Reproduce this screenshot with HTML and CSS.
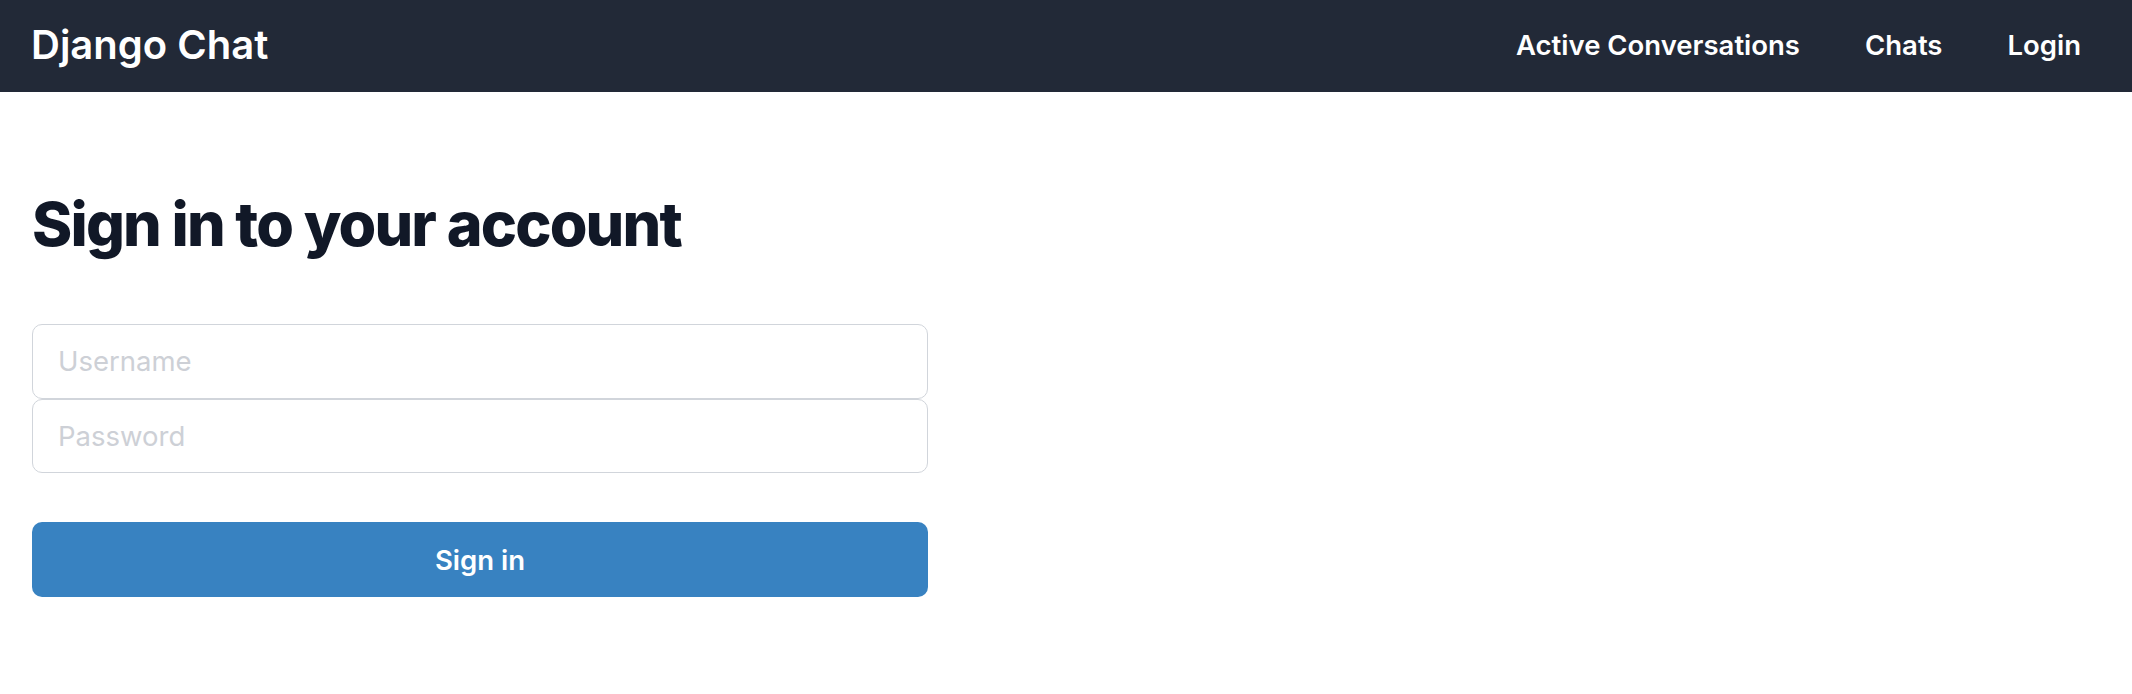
FILE: index.html
```html
<!DOCTYPE html>
<html lang="en">
<head>
<meta charset="utf-8">
<title>Django Chat</title>
<link rel="stylesheet" href="styles.css">
</head>
<body>
<header class="navbar">
  <a class="brand" href="#">Django Chat</a>
  <nav class="nav-links">
    <a href="#">Active Conversations</a>
    <a href="#">Chats</a>
    <a href="#">Login</a>
  </nav>
</header>
<main class="content">
  <h1 class="title">Sign in to your account</h1>
  <form class="login-form">
    <div class="fields">
      <input class="field" type="text" placeholder="Username">
      <input class="field" type="password" placeholder="Password">
    </div>
    <button class="submit" type="button">Sign in</button>
  </form>
</main>
</body>
</html>
```

FILE: styles.css
```css
* { box-sizing: border-box; }
html, body { margin: 0; padding: 0; background: #ffffff; }
body { font-family: Inter, "Noto Sans", sans-serif; }

.navbar {
  height: 92px;
  background: #222937;
  display: flex;
  align-items: center;
  justify-content: space-between;
  padding: 0 51px 3px 31px;
}
.brand {
  color: #ffffff;
  text-decoration: none;
  font-size: 40px;
  font-weight: 600;
  line-height: 56px;
}
.nav-links {
  display: flex;
  gap: 65px;
}
.nav-links a {
  color: #ffffff;
  text-decoration: none;
  font-size: 27.5px;
  font-weight: 600;
  line-height: 40px;
}

.content {
  padding: 0 32px;
}
.title {
  margin: 98px 0 0;
  font-size: 61px;
  line-height: 68px;
  font-weight: 800;
  letter-spacing: -0.03em;
  color: #111827;
}
.login-form {
  width: 896px;
  margin-top: 66px;
}
.fields {
  display: flex;
  flex-direction: column;
}
.field {
  height: 74.5px;
  width: 100%;
  border: 1.8px solid #d1d5db;
  border-radius: 10px;
  padding: 0 24px 0 25px;
  font-family: Inter, "Noto Sans", sans-serif;
  font-size: 27.5px;
  color: #111827;
  background: #ffffff;
  outline: none;
}
.field::placeholder { color: #cdd0d6; }
.submit {
  display: block;
  width: 100%;
  height: 75px;
  margin-top: 49px;
  border: 0;
  border-radius: 10px;
  background: #3882c1;
  color: #ffffff;
  font-family: Inter, "Noto Sans", sans-serif;
  font-size: 27.5px;
  font-weight: 600;
  cursor: pointer;
}
```
